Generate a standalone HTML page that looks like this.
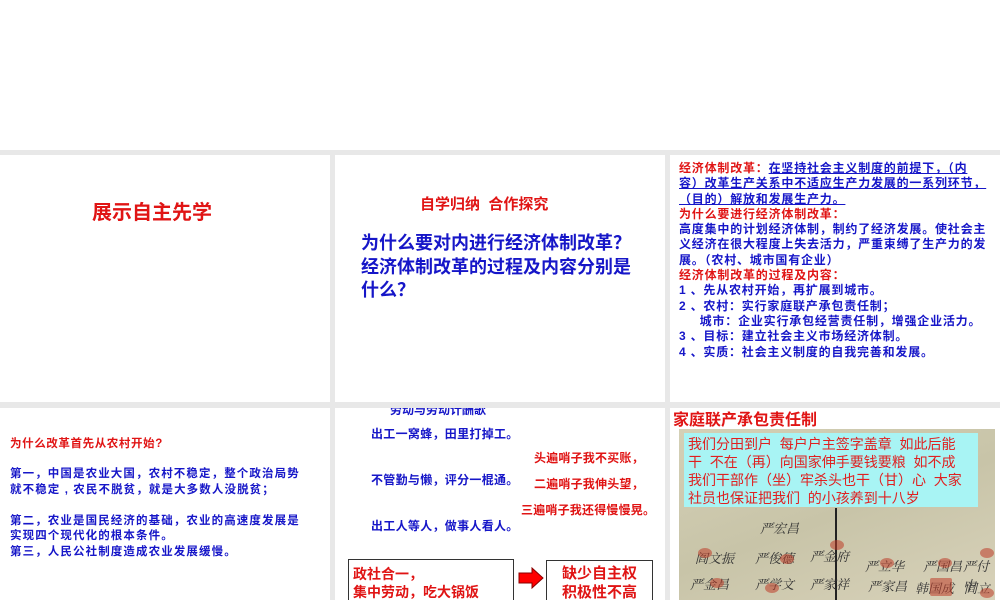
<!DOCTYPE html>
<html><head><meta charset="utf-8"><style>
*{margin:0;padding:0;box-sizing:border-box}
body{width:1000px;height:600px;background:#fff;position:relative;overflow:hidden;font-family:"Liberation Sans","Noto Sans CJK SC",sans-serif;font-weight:bold}
.bg{position:absolute;left:0;top:150px;width:1000px;height:450px;background:#e8e8e8}
.p{position:absolute;background:#fff;overflow:hidden}
.a{position:absolute;white-space:nowrap}
.r{color:#e01414}.b{color:#1616c8}
.u{text-decoration:underline}
.st{position:absolute;width:14px;height:10px;border-radius:50%;background:rgba(190,60,40,.55)}
.sig{position:absolute;color:#333;font-family:"Noto Serif CJK SC",serif;font-weight:normal;font-size:13px;font-style:italic}
</style></head><body>
<div class="bg"></div>
<!-- panel 1 -->
<div class="p" style="left:0;top:155px;width:330px;height:247px">
<div class="a r" style="left:92px;top:41px;font-size:20px">展示自主先学</div>
</div>
<!-- panel 2 -->
<div class="p" style="left:335px;top:155px;width:330px;height:247px">
<div class="a r" style="left:85px;top:38px;font-size:15px">自学归纳&nbsp;&nbsp;合作探究</div>
<div class="a b" style="left:26px;top:77px;font-size:18px;line-height:23.5px">为什么要对内进行经济体制改革？<br>经济体制改革的过程及内容分别是<br>什么？</div>
</div>
<!-- panel 3 -->
<div class="p" style="left:670px;top:155px;width:330px;height:247px">
<div class="a" style="left:9px;top:6px;font-size:12px;line-height:15.3px;letter-spacing:0.8px">
<span class="r">经济体制改革：</span><span class="b u">在坚持社会主义制度的前提下，（内</span><br>
<span class="b u">容）改革生产关系中不适应生产力发展的一系列环节，</span><br>
<span class="b u">（目的）解放和发展生产力。</span><br>
<span class="r">为什么要进行经济体制改革：</span><br>
<span class="b">高度集中的计划经济体制，制约了经济发展。使社会主</span><br>
<span class="b">义经济在很大程度上失去活力，严重束缚了生产力的发</span><br>
<span class="b">展。（农村、城市国有企业）</span><br>
<span class="r">经济体制改革的过程及内容：</span><br>
<span class="b">1 、先从农村开始，再扩展到城市。</span><br>
<span class="b">2 、农村：实行家庭联产承包责任制；</span><br>
<span class="b">&nbsp;&nbsp;&nbsp;&nbsp;&nbsp;城市：企业实行承包经营责任制，增强企业活力。</span><br>
<span class="b">3 、目标：建立社会主义市场经济体制。</span><br>
<span class="b">4 、实质：社会主义制度的自我完善和发展。</span>
</div>
</div>
<!-- panel 4 -->
<div class="p" style="left:0;top:408px;width:330px;height:192px">
<div class="a r" style="left:10px;top:27px;font-size:11.5px;letter-spacing:0.6px">为什么改革首先从农村开始?</div>
<div class="a b" style="left:10px;top:59px;font-size:11.5px;line-height:15.5px;letter-spacing:1.1px">第一，中国是农业大国，农村不稳定，整个政治局势<br>就不稳定 , 农民不脱贫，就是大多数人没脱贫；<br><br>第二，农业是国民经济的基础，农业的高速度发展是<br>实现四个现代化的根本条件。<br>第三，人民公社制度造成农业发展缓慢。</div>
</div>
<!-- panel 5 -->
<div class="p" style="left:335px;top:408px;width:330px;height:192px">
<div class="a b" style="left:55px;top:-7px;font-size:12px">劳动与劳动计酬歌</div>
<div class="a b" style="left:36px;top:17px;font-size:12px;letter-spacing:0.3px">出工一窝蜂，田里打掉工。</div>
<div class="a b" style="left:36px;top:63px;font-size:12px;letter-spacing:0.3px">不管勤与懒，评分一棍通。</div>
<div class="a b" style="left:36px;top:109px;font-size:12px;letter-spacing:0.3px">出工人等人，做事人看人。</div>
<div class="a r" style="left:199px;top:41px;font-size:12px;letter-spacing:0.2px">头遍哨子我不买账，</div>
<div class="a r" style="left:199px;top:67px;font-size:12px;letter-spacing:0.2px">二遍哨子我伸头望，</div>
<div class="a r" style="left:186px;top:93px;font-size:12px;letter-spacing:0.2px">三遍哨子我还得慢慢晃。</div>
<div class="a" style="left:13px;top:151px;width:166px;height:50px;border:1.5px solid #333"></div>
<div class="a r" style="left:18px;top:157px;font-size:14px;line-height:18px">政社合一，<br>集中劳动，吃大锅饭</div>
<svg class="a" style="left:183px;top:159px" width="26" height="22"><path d="M1 6H14V1L25 11L14 21V16H1Z" fill="#f00" stroke="#800" stroke-width="1"/></svg>
<div class="a" style="left:211px;top:152px;width:107px;height:50px;border:1.5px solid #333"></div>
<div class="a r" style="left:211px;top:156px;width:107px;text-align:center;font-size:15px;line-height:19px">缺少自主权<br>积极性不高</div>
</div>
<!-- panel 6 -->
<div class="p" style="left:670px;top:408px;width:330px;height:192px">
<div class="a r" style="left:3px;top:4px;font-size:16px;line-height:17px">家庭联产承包责任制</div>
<div class="a" style="left:9px;top:21px;width:316px;height:171px;background:linear-gradient(160deg,#d4d0b6,#c8c4a8 50%,#d8d2ba)"></div>
<div class="a" style="left:165px;top:100px;width:2px;height:92px;background:#222"></div>
<div class="sig" style="left:25px;top:140px">阎文振</div><div class="sig" style="left:85px;top:140px">严俊德</div><div class="sig" style="left:140px;top:138px">严金府</div>
<div class="sig" style="left:195px;top:148px">严立华</div><div class="sig" style="left:253px;top:148px">严国昌</div><div class="sig" style="left:293px;top:148px">严付中</div>
<div class="sig" style="left:20px;top:166px">严金昌</div><div class="sig" style="left:85px;top:166px">严学文</div><div class="sig" style="left:140px;top:166px">严家祥</div>
<div class="sig" style="left:198px;top:168px">严家昌</div><div class="sig" style="left:245px;top:170px">韩国成</div><div class="sig" style="left:294px;top:170px">阎立江</div>
<div class="sig" style="left:90px;top:110px">严宏昌</div>
<div class="st" style="left:28px;top:140px"></div><div class="st" style="left:110px;top:146px"></div><div class="st" style="left:160px;top:132px"></div><div class="st" style="left:210px;top:150px"></div><div class="st" style="left:268px;top:150px"></div><div class="st" style="left:310px;top:140px"></div><div class="st" style="left:40px;top:170px"></div><div class="st" style="left:95px;top:175px"></div><div class="st" style="left:260px;top:170px;width:22px;height:18px;border-radius:2px"></div><div class="st" style="left:310px;top:180px"></div>
<div class="a" style="left:14px;top:25px;width:294px;height:74px;background:#a8f4f4"></div>
<div class="a r" style="left:18px;top:27px;font-size:14px;line-height:18px;font-weight:normal;color:#e02020">我们分田到户&nbsp;&nbsp;每户户主签字盖章&nbsp;&nbsp;如此后能<br>干&nbsp;&nbsp;不在（再）向国家伸手要钱要粮&nbsp;&nbsp;如不成<br>我们干部作（坐）牢杀头也干（甘）心&nbsp;&nbsp;大家<br>社员也保证把我们&nbsp;&nbsp;的小孩养到十八岁</div>
</div>
</body></html>
